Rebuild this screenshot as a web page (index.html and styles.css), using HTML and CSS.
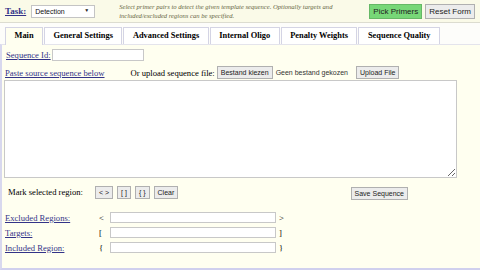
FILE: index.html
```html
<!DOCTYPE html>
<html lang="en">
<head>
  <meta charset="UTF-8">
  <title>Primer3Plus</title>
  <link rel="stylesheet" href="styles.css">
</head>
<body>

  <div class="header">
    <a href="#" class="task-link">Task:</a>
    <div class="select-wrap">
      <select class="task-select">
        <option>Detection</option>
      </select>
    </div>
    <div class="task-note">
      Select primer pairs to detect the given template sequence. Optionally targets and<br>
      included/excluded regions can be specified.
    </div>
    <div class="header-buttons">
      <button type="button" class="btn btn-pick">Pick Primers</button>
      <button type="button" class="btn">Reset Form</button>
    </div>
  </div>

  <div class="tabs">
    <div class="tab active">Main</div>
    <div class="tab">General Settings</div>
    <div class="tab">Advanced Settings</div>
    <div class="tab">Internal Oligo</div>
    <div class="tab">Penalty Weights</div>
    <div class="tab">Sequence Quality</div>
  </div>

  <div class="panel">
    <div class="row seq-id">
      <a href="#">Sequence Id:</a>
      <input type="text" class="seq-id-input">
    </div>

    <div class="row upload">
      <a href="#">Paste source sequence below</a>
      <span class="upload-label">Or upload sequence file:</span>
      <button type="button" class="btn">Bestand kiezen</button>
      <span class="file-name">Geen bestand gekozen</span>
      <button type="button" class="btn upload-btn">Upload File</button>
    </div>

    <textarea class="sequence"></textarea>

    <div class="row mark">
      <span>Mark selected region:</span>
      <button type="button" class="btn mark-btn">&lt; &gt;</button>
      <button type="button" class="btn">[ ]</button>
      <button type="button" class="btn">{ }</button>
      <button type="button" class="btn">Clear</button>
      <button type="button" class="btn save-btn">Save Sequence</button>
    </div>

    <div class="regions">
      <div class="region">
        <a href="#">Excluded Regions:</a>
        <span class="bracket">&lt;</span>
        <input type="text">
        <span class="bracket-end">&gt;</span>
      </div>
      <div class="region">
        <a href="#">Targets:</a>
        <span class="bracket">[</span>
        <input type="text">
        <span class="bracket-end">]</span>
      </div>
      <div class="region">
        <a href="#">Included Region:</a>
        <span class="bracket">{</span>
        <input type="text">
        <span class="bracket-end">}</span>
      </div>
    </div>
  </div>

</body>
</html>
```

FILE: styles.css
```css
body {
  margin: 0;
  width: 480px;
  height: 270px;
  overflow: hidden;
  font-family: "Liberation Serif", serif;
  font-size: 8.6px;
  color: #000;
  background-color: #fdfdf3;
}

a {
  color: #333388;
}

.header {
  display: flex;
  align-items: center;
  height: 22px;
  padding: 0 5px;
  background-color: #fafae8;
  border-bottom: 1px solid #dcdcd0;
}

.task-link {
  font-weight: bold;
  font-size: 9px;
}

/* select with a small arrow on top */
.select-wrap {
  position: relative;
  margin-left: 5px;
}

.select-wrap::after {
  content: "\25BC";
  position: absolute;
  right: 6px;
  top: 3px;
  font-size: 5px;
  color: #222;
  pointer-events: none;
}

.task-select {
  appearance: none;
  -webkit-appearance: none;
  display: block;
  width: 64px;
  height: 13px;
  padding: 0 3px;
  font-family: "Liberation Sans", sans-serif;
  font-size: 7px;
  border: 1px solid #c4c4c4;
  border-radius: 0;
  background-color: #fff;
  color: #111;
}

.task-note {
  margin-left: 24px;
  font-size: 6.6px;
  font-style: italic;
  line-height: 9px;
  color: #666644;
}

.header-buttons {
  margin-left: auto;
  display: flex;
  gap: 3px;
}

.btn {
  font-family: "Liberation Sans", sans-serif;
  font-size: 7px;
  height: 13px;
  padding: 0 3px;
  border: 1px solid #b0b0b0;
  background-color: #ececec;
  color: #222;
}

.header-buttons .btn {
  height: 15px;
  font-size: 8px;
}

.btn-pick {
  background-color: #77d777;
  border-color: #66b866;
}

.tabs {
  display: flex;
  padding: 4px 0 0 5px;
  background-color: #fdfdfa;
}

.tab {
  height: 16px;
  line-height: 16px;
  padding: 0 8.5px;
  font-weight: bold;
  font-size: 8.4px;
  border: 1px solid #d4d4e4;
  border-bottom: none;
  margin-right: 1px;
  background-color: #fff;
}

.tab.active {
  background-color: #fffff0;
  margin-bottom: -1px;
  height: 17px;
}

.panel {
  background-color: #fffff0;
  border-top: 1px solid #e4e4ec;
  border-left: 2px solid #d8d8ee;
  border-bottom: 2px solid #d0d0ee;
  padding: 4px 2px 10px 2px;
  height: 209px;
}

.row {
  display: flex;
  align-items: center;
}

.seq-id {
  padding-left: 2px;
  gap: 1px;
}

.seq-id-input {
  width: 90px;
  height: 10px;
  padding: 0;
  border: 1px solid #c8c8c8;
}

.upload {
  margin-top: 5px;
  padding-left: 1px;
}

.upload-label {
  margin-left: 26px;
  margin-right: 2px;
}

.file-name {
  margin-left: 3px;
  font-family: "Liberation Sans", sans-serif;
  font-size: 7px;
  color: #333;
}

.upload-btn {
  margin-left: 8px;
}

.sequence {
  display: block;
  margin-top: 1px;
  width: 451px;
  height: 96px;
  padding: 0;
  border: 1px solid #c8c8c8;
  resize: both;
  background-color: #fff;
}

.mark {
  margin-top: 6px;
  padding-left: 4px;
  gap: 4px;
}

.mark-btn {
  margin-left: 8px;
}

.save-btn {
  margin-left: auto;
  margin-right: 70px;
  margin-top: 3px;
}

.regions {
  margin-top: 12px;
  display: flex;
  flex-direction: column;
  gap: 4px;
}

.region {
  display: flex;
  align-items: center;
  padding-left: 1px;
}

.region a {
  width: 94px;
}

.bracket {
  width: 11px;
}

.region input {
  width: 164px;
  height: 9px;
  padding: 0;
  border: 1px solid #c8c8c8;
}

.bracket-end {
  margin-left: 3px;
}
```
